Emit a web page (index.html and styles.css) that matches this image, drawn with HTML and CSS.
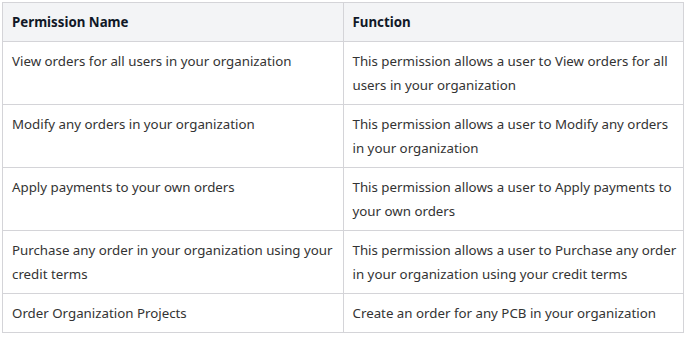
FILE: index.html
```html
<!DOCTYPE html>
<html>
<head>
    <meta charset="UTF-8">
    <title>Permissions</title>
    <link rel="stylesheet" href="styles.css">
</head>
<body>
    <table class="perm-table">
        <thead>
            <tr>
                <th>Permission Name</th>
                <th>Function</th>
            </tr>
        </thead>
        <tbody>
            <tr>
                <td>View orders for all users in your organization</td>
                <td>This permission allows a user to View orders for all users in your organization</td>
            </tr>
            <tr>
                <td>Modify any orders in your organization</td>
                <td>This permission allows a user to Modify any orders in your organization</td>
            </tr>
            <tr>
                <td>Apply payments to your own orders</td>
                <td>This permission allows a user to Apply payments to your own orders</td>
            </tr>
            <tr>
                <td>Purchase any order in your organization using your credit terms</td>
                <td>This permission allows a user to Purchase any order in your organization using your credit terms</td>
            </tr>
            <tr>
                <td>Order Organization Projects</td>
                <td>Create an order for any PCB in your organization</td>
            </tr>
        </tbody>
    </table>
</body>
</html>
```

FILE: styles.css
```css
body {
    margin: 0;
    padding: 2px 4px 0 2px;
    background-color: #fff;
    font-family: "Noto Sans", "Open Sans", sans-serif;
    color: #333;
}
.perm-table {
    width: 100%;
    border-collapse: collapse;
    table-layout: fixed;
    font-size: 13.3px;
    line-height: 24px;
}
.perm-table th,
.perm-table td {
    border: 1px solid #d4d4d8;
    padding: 7px 4px 7px 9px;
    text-align: left;
    vertical-align: top;
}
.perm-table th {
    background-color: #f3f4f6;
    color: #111827;
    font-weight: bold;
}
```
